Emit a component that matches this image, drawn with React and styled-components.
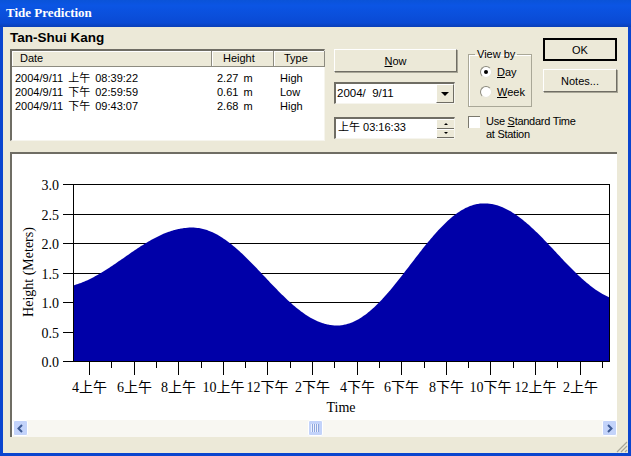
import styled, { createGlobalStyle } from "styled-components";

const GlobalStyle = createGlobalStyle`
    html, body{
        margin: 0;
        padding: 0;
        background: #0a3fc4;
    }
`

const UI_FONT = `"Liberation Sans", "Noto Sans CJK TC", sans-serif`;
const CHART_FONT = `"Liberation Serif", "Noto Sans CJK TC", serif`;

const Window = styled.div`
    position: relative;
    box-sizing: border-box;
    width: 631px;
    height: 456px;
    display: flex;
    flex-direction: column;
    padding: 0 3px 3px;
    background: #0a45cf;
    font: 11px ${UI_FONT};
    color: #000;
    overflow: hidden;
`

const TitleBar = styled.div`
    flex: none;
    height: 27px;
    margin: 0 -3px;
    padding: 0 6px 2px;
    box-sizing: border-box;
    display: flex;
    align-items: center;
    background: linear-gradient(#0a53d8, #0b55e4 20%, #0a4ad4 85%, #0a3fb8);
    color: #fff;
    font: bold 13px ${CHART_FONT};
`

const Body = styled.div`
    flex: 1;
    display: flex;
    flex-direction: column;
    background: #ece9d8;
    padding: 0 11px 0 7px;
`

const TopRow = styled.div`
    flex: none;
    height: 125px;
    display: flex;
`

const ListColumn = styled.div`
    width: 315px;
    margin-right: 9px;
`

const Station = styled.div`
    height: 22px;
    font: bold 13.5px/22px ${UI_FONT};
`

const ListBox = styled.div`
    box-sizing: border-box;
    height: 92px;
    background: #fff;
    border-top: 2px solid #6f6d64;
    border-left: 2px solid #6f6d64;
    border-right: 1px solid #f6f5ee;
    border-bottom: 1px solid #f6f5ee;
`

const HeaderRow = styled.div`
    display: grid;
    grid-template-columns: 200px 62px 51px;
    height: 16px;
    background: #ece9d8;
`

const HeaderCell = styled.div`
    box-sizing: border-box;
    padding-left: ${({$indent}) => $indent}px;
    line-height: 15px;
    border-right: 1px solid #8d8b80;
    border-bottom: 1px solid #8d8b80;
    box-shadow: inset 1px 1px 0 #fff;
`

const ListRows = styled.div`
    padding-top: 4px;
`

const ListRow = styled.div`
    display: grid;
    grid-template-columns: 202px 63px 1fr;
    padding-left: 3px;
    height: 14px;
    line-height: 14px;
    word-spacing: 2px;
`

const ControlColumn = styled.div`
    width: 123px;
    margin-right: 11px;
    padding-top: 22px;
    display: flex;
    flex-direction: column;
`

const Button = styled.button`
    box-sizing: border-box;
    display: block;
    width: ${({$width}) => $width}px;
    height: 23px;
    padding: 0;
    font: 11px ${UI_FONT};
    color: #000;
    background: #ece9d8;
    border: 1px solid #fff;
    border-right-color: #6f6d64;
    border-bottom-color: #6f6d64;
    box-shadow: 1px 1px 0 #a8a697;

    ${({$primary}) => $primary && `
        border: 2px solid #000;
        box-shadow: none;
    `}
`

const Field = styled.div`
    box-sizing: border-box;
    width: 121px;
    height: 22px;
    margin-top: ${({$top}) => $top}px;
    display: flex;
    background: #fff;
    border-top: 2px solid #6f6d64;
    border-left: 2px solid #6f6d64;
    border-right: 1px solid #f6f5ee;
    border-bottom: 1px solid #f6f5ee;
`

const FieldText = styled.div`
    flex: 1;
    padding-left: ${({$indent}) => $indent}px;
    line-height: ${({$line}) => $line}px;
    font-size: ${({$size}) => $size}px;
    white-space: pre;
`

const DropButton = styled.div`
    width: 16px;
    display: flex;
    align-items: center;
    justify-content: center;
    background: #ece9d8;
    border: 1px solid #fff;
    border-right-color: #6f6d64;
    border-bottom-color: #6f6d64;

    &::after{
        content: "";
        border-top: 4px solid #000;
        border-left: 4px solid transparent;
        border-right: 4px solid transparent;
    }
`

const SpinStack = styled.div`
    width: 17px;
    display: flex;
    flex-direction: column;
`

const SpinButton = styled.div`
    flex: 1;
    display: flex;
    align-items: center;
    justify-content: center;
    background: #ece9d8;
    border-top: 1px solid #fff;
    border-bottom: 1px solid #6f6d64;

    &::after{
        content: "";
        border-left: 2px solid transparent;
        border-right: 2px solid transparent;
        ${({$up}) => $up ? "border-bottom: 2px solid #000;" : "border-top: 2px solid #000;"}
    }
`

const OptionsColumn = styled.div`
    width: 150px;
    padding-top: 11px;
`

const OptionsTop = styled.div`
    display: flex;
    justify-content: space-between;
    align-items: flex-start;
    height: 69px;
`

const ViewBy = styled.fieldset`
    box-sizing: border-box;
    width: 64px;
    height: 59px;
    margin: 10px 0 0;
    padding: 1px 0 0 11px;
    border: 1px solid #a9a797;
    box-shadow: inset 1px 1px 0 #fff;

    legend{
        padding: 0 2px;
        margin-left: -5px;
        line-height: 13px;
    }
`

const RadioRow = styled.div`
    display: flex;
    align-items: center;
    gap: 5px;
    height: 20px;
`

const RadioMark = styled.span`
    box-sizing: border-box;
    width: 12px;
    height: 12px;
    border-radius: 50%;
    display: flex;
    align-items: center;
    justify-content: center;
    background: #fff;
    border: 1px solid #8a887c;
    border-right-color: #e8e6d8;
    border-bottom-color: #e8e6d8;

    ${({$checked}) => $checked && `
        &::after{
            content: "";
            width: 4px;
            height: 4px;
            border-radius: 50%;
            background: #000;
        }
    `}
`

const ButtonStack = styled.div`
    display: flex;
    flex-direction: column;
    gap: 8px;
`

const CheckRow = styled.div`
    display: flex;
    gap: 6px;
    margin-top: 8px;
    line-height: 13px;
    letter-spacing: -0.27px;
`

const CheckMark = styled.span`
    flex: none;
    box-sizing: border-box;
    width: 12px;
    height: 12px;
    background: #fff;
    border-top: 1px solid #7b796e;
    border-left: 1px solid #7b796e;
    margin-top: 1px;
`

const ChartPanel = styled.div`
    flex: none;
    box-sizing: border-box;
    height: 285px;
    display: flex;
    flex-direction: column;
    background: #fff;
    border-top: 2px solid #6f6d64;
    border-left: 2px solid #6f6d64;
`

const ChartSvg = styled.svg`
    display: block;
    flex: none;
`

const AxisText = styled.text`
    font: 14px ${CHART_FONT};
    fill: #000;
`

const ScrollBar = styled.div`
    flex: none;
    height: 17px;
    margin-left: 1px;
    display: flex;
    background: #f8f7f2;
`

const ScrollButton = styled.div`
    width: 15px;
    height: 16px;
    display: flex;
    align-items: center;
    justify-content: center;
    box-sizing: border-box;
    background: #c3d3fa;
    border: 1px solid #fff;
    border-radius: 2px;
    color: #3d5a94;
`

const ScrollTrack = styled.div`
    flex: 1;
    display: flex;
    justify-content: center;
`

const ScrollThumb = styled.div`
    box-sizing: border-box;
    width: 15px;
    height: 16px;
    background: repeating-linear-gradient(90deg, #eef2fd 0 1px, #8ea6de 1px 2px) center / 8px 8px no-repeat #c3d3fa;
    border: 1px solid #fff;
    border-radius: 2px;
`

const SizeGrip = styled.svg`
    position: absolute;
    right: 3px;
    bottom: 3px;
`

const Y0 = 361.5;
const PX_PER_METER = 59;
const toY = h => Y0 - h * PX_PER_METER;

// turning points of the tide, x in page pixels
const tide = [
    [56, 1.25],
    [192, 2.27],
    [337, 0.61],
    [484, 2.68],
    [628, 1.02],
];

function heightAt(x){
    for(let i = 0; i < tide.length - 1; i++){
        const [x0, h0] = tide[i];
        const [x1, h1] = tide[i + 1];
        if(x >= x0 && x <= x1){
            const t = (x - x0) / (x1 - x0);
            return h0 + (h1 - h0) * (1 - Math.cos(Math.PI * t)) / 2;
        }
    }
    return 0;
}

function tidePath(){
    let d = `M73 ${Y0}`;
    for(let x = 73; x <= 609; x++){
        d += ` L${x} ${toY(heightAt(x)).toFixed(1)}`;
    }
    return d + ` L609 ${Y0} Z`;
}

const yLabels = ["0.0", "0.5", "1.0", "1.5", "2.0", "2.5", "3.0"];
const xLabels = [
    "4上午", "6上午", "8上午", "10上午", "12下午", "2下午",
    "4下午", "6下午", "8下午", "10下午", "12上午", "2上午",
];
const TICK_START = 89.5;
const TICK_STEP = 44.6;

function TideChart(){
    return (
        <ChartSvg width="605" height="266" viewBox="12 154 605 266">
            {yLabels.map((label, i) => {
                const y = Math.round(toY(i * 0.5) - 0.5) + 0.5;
                return (
                    <g key={label}>
                        <line x1="63" x2="609" y1={y} y2={y} stroke="#000" />
                        <AxisText x="59" y={y + 5} textAnchor="end">{label}</AxisText>
                    </g>
                );
            })}
            <path d={tidePath()} fill="#0000a8" />
            <line x1="73.5" x2="73.5" y1="184" y2="362" stroke="#000" />
            <line x1="609.5" x2="609.5" y1="184" y2="362" stroke="#000" />
            <line x1="63" x2="610" y1="361.5" y2="361.5" stroke="#000" />
            {xLabels.map((label, i) => {
                const x = Math.round(TICK_START + i * TICK_STEP - 0.5) + 0.5;
                const minor = Math.round(TICK_START + (i + 0.5) * TICK_STEP - 0.5) + 0.5;
                return (
                    <g key={label}>
                        <line x1={x} x2={x} y1="362" y2="375" stroke="#000" />
                        <line x1={minor} x2={minor} y1="362" y2="368" stroke="#000" />
                        <AxisText x={x} y="392" textAnchor="middle">{label}</AxisText>
                    </g>
                );
            })}
            <AxisText x="341" y="412" textAnchor="middle">Time</AxisText>
            <AxisText x="33" y="272" textAnchor="middle" transform="rotate(-90 33 272)">Height (Meters)</AxisText>
        </ChartSvg>
    );
}

const predictions = [
    ["2004/9/11 上午 08:39:22", "2.27 m", "High"],
    ["2004/9/11 下午 02:59:59", "0.61 m", "Low"],
    ["2004/9/11 下午 09:43:07", "2.68 m", "High"],
];

function App(){
    return (
        <Window>
            <GlobalStyle />
            <TitleBar>Tide Prediction</TitleBar>
            <Body>
                <TopRow>
                    <ListColumn>
                        <Station>Tan-Shui Kang</Station>
                        <ListBox>
                            <HeaderRow>
                                <HeaderCell $indent={8}>Date</HeaderCell>
                                <HeaderCell $indent={11}>Height</HeaderCell>
                                <HeaderCell $indent={10}>Type</HeaderCell>
                            </HeaderRow>
                            <ListRows>
                                {predictions.map(([date, height, type]) => (
                                    <ListRow key={date}>
                                        <span>{date}</span>
                                        <span>{height}</span>
                                        <span>{type}</span>
                                    </ListRow>
                                ))}
                            </ListRows>
                        </ListBox>
                    </ListColumn>
                    <ControlColumn>
                        <Button $width={123}><u>N</u>ow</Button>
                        <Field $top={10}>
                            <FieldText $indent={1} $size={11.5} $line={18}>2004/  9/11</FieldText>
                            <DropButton />
                        </Field>
                        <Field $top={13}>
                            <FieldText $indent={2} $size={11} $line={17}>上午 03:16:33</FieldText>
                            <SpinStack>
                                <SpinButton $up />
                                <SpinButton />
                            </SpinStack>
                        </Field>
                    </ControlColumn>
                    <OptionsColumn>
                        <OptionsTop>
                            <ViewBy>
                                <legend>View by</legend>
                                <RadioRow><RadioMark $checked /><span><u>D</u>ay</span></RadioRow>
                                <RadioRow><RadioMark /><span><u>W</u>eek</span></RadioRow>
                            </ViewBy>
                            <ButtonStack>
                                <Button $width={74} $primary>OK</Button>
                                <Button $width={74}>Notes...</Button>
                            </ButtonStack>
                        </OptionsTop>
                        <CheckRow>
                            <CheckMark />
                            <span>Use <u>S</u>tandard Time<br />at Station</span>
                        </CheckRow>
                    </OptionsColumn>
                </TopRow>
                <ChartPanel>
                    <TideChart />
                    <ScrollBar>
                        <ScrollButton>
                            <svg width="9" height="9" viewBox="0 0 9 9">
                                <path d="M6 1 L2.5 4.5 L6 8" fill="none" stroke="currentColor" strokeWidth="2" />
                            </svg>
                        </ScrollButton>
                        <ScrollTrack><ScrollThumb /></ScrollTrack>
                        <ScrollButton>
                            <svg width="9" height="9" viewBox="0 0 9 9">
                                <path d="M3 1 L6.5 4.5 L3 8" fill="none" stroke="currentColor" strokeWidth="2" />
                            </svg>
                        </ScrollButton>
                    </ScrollBar>
                </ChartPanel>
            </Body>
            <SizeGrip width="14" height="14" viewBox="0 0 14 14">
                <path d="M13 3 L3 13 M13 7 L7 13 M13 11 L11 13" stroke="#a8a697" strokeWidth="1.2" />
            </SizeGrip>
        </Window>
    );
}

export default App
